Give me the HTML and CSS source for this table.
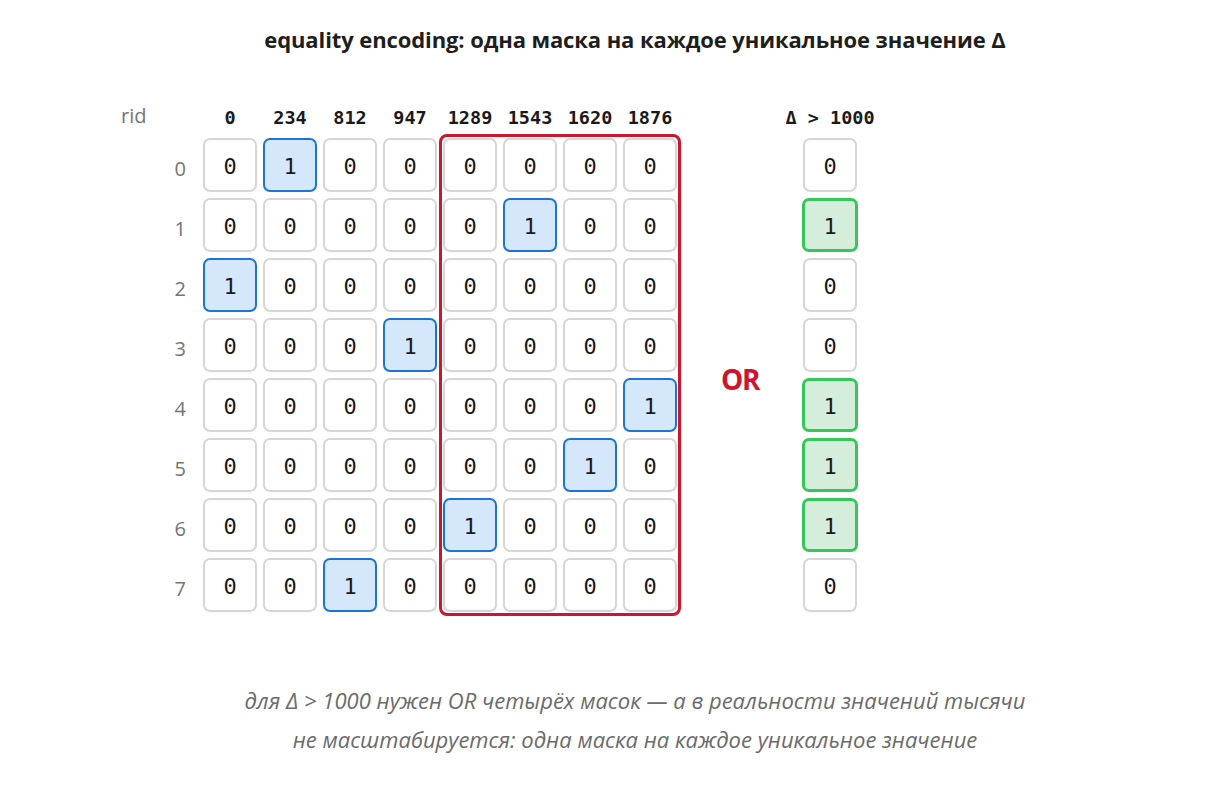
FILE: index.html
```html
<!DOCTYPE html>
<html lang="ru">
<head>
<meta charset="utf-8">
<title>equality encoding</title>
<link rel="stylesheet" href="styles.css">
</head>
<body>
<div class="page">
  <h1 class="title">equality encoding: одна маска на каждое уникальное значение Δ</h1>

  <div class="figure">
    <div class="labels">
      <div class="rid">rid</div>
      <div class="rn">0</div><div class="rn">1</div><div class="rn">2</div><div class="rn">3</div>
      <div class="rn">4</div><div class="rn">5</div><div class="rn">6</div><div class="rn">7</div>
    </div>

    <div class="group">
      <div class="heads four">
        <div class="h">0</div><div class="h">234</div><div class="h">812</div><div class="h">947</div>
      </div>
      <div class="cells four">
        <div class="c">0</div><div class="c on">1</div><div class="c">0</div><div class="c">0</div>
        <div class="c">0</div><div class="c">0</div><div class="c">0</div><div class="c">0</div>
        <div class="c on">1</div><div class="c">0</div><div class="c">0</div><div class="c">0</div>
        <div class="c">0</div><div class="c">0</div><div class="c">0</div><div class="c on">1</div>
        <div class="c">0</div><div class="c">0</div><div class="c">0</div><div class="c">0</div>
        <div class="c">0</div><div class="c">0</div><div class="c">0</div><div class="c">0</div>
        <div class="c">0</div><div class="c">0</div><div class="c">0</div><div class="c">0</div>
        <div class="c">0</div><div class="c">0</div><div class="c on">1</div><div class="c">0</div>
      </div>
    </div>

    <div class="group">
      <div class="heads four">
        <div class="h">1289</div><div class="h">1543</div><div class="h">1620</div><div class="h">1876</div>
      </div>
      <div class="box">
        <div class="cells four">
          <div class="c">0</div><div class="c">0</div><div class="c">0</div><div class="c">0</div>
          <div class="c">0</div><div class="c on">1</div><div class="c">0</div><div class="c">0</div>
          <div class="c">0</div><div class="c">0</div><div class="c">0</div><div class="c">0</div>
          <div class="c">0</div><div class="c">0</div><div class="c">0</div><div class="c">0</div>
          <div class="c">0</div><div class="c">0</div><div class="c">0</div><div class="c on">1</div>
          <div class="c">0</div><div class="c">0</div><div class="c on">1</div><div class="c">0</div>
          <div class="c on">1</div><div class="c">0</div><div class="c">0</div><div class="c">0</div>
          <div class="c">0</div><div class="c">0</div><div class="c">0</div><div class="c">0</div>
        </div>
      </div>
    </div>

    <div class="or-col">
      <div class="or">OR</div>
    </div>

    <div class="group">
      <div class="heads one">
        <div class="h wide">Δ &gt; 1000</div>
      </div>
      <div class="cells one">
        <div class="c">0</div>
        <div class="c hit">1</div>
        <div class="c">0</div>
        <div class="c">0</div>
        <div class="c hit">1</div>
        <div class="c hit">1</div>
        <div class="c hit">1</div>
        <div class="c">0</div>
      </div>
    </div>
  </div>

  <div class="caption">
    <p>для Δ &gt; 1000 нужен OR четырёх масок — а в реальности значений тысячи</p>
    <p>не масштабируется: одна маска на каждое уникальное значение</p>
  </div>
</div>
</body>
</html>
```

FILE: styles.css
```css
* { box-sizing: border-box; }

html, body {
  margin: 0;
  padding: 0;
  background: #ffffff;
}

body {
  font-family: "Open Sans", "Noto Sans", "DejaVu Sans", sans-serif;
  color: #1f1f1f;
}

.page {
  padding: 24px 0 0 63px;
}

.title {
  margin: 0;
  text-align: center;
  font-size: 22px;
  font-weight: 700;
  line-height: 30px;
  color: #1e1e1e;
  letter-spacing: -0.1px;
}

.figure {
  display: flex;
  align-items: flex-start;
  gap: 6px;
  margin: 48px 0 0 58px;
}

.labels {
  width: 76px;
  display: grid;
  grid-template-rows: 30px repeat(8, 54px);
  row-gap: 6px;
  color: #757575;
  font-size: 20px;
}

.rid {
  display: flex;
  align-items: center;
  padding-bottom: 3px;
}

.rn {
  display: flex;
  align-items: center;
  justify-content: flex-end;
  padding: 6px 11px 0 0;
}

.group {
  display: flex;
  flex-direction: column;
}

.heads {
  display: grid;
  column-gap: 6px;
  height: 30px;
  margin-bottom: 6px;
}

.four { grid-template-columns: repeat(4, 54px); }
.one { grid-template-columns: 54px; }

.h {
  display: flex;
  align-items: center;
  justify-content: center;
  font-family: "DejaVu Sans Mono", "Liberation Mono", monospace;
  font-weight: 700;
  font-size: 18.5px;
  color: #1a1a1a;
  white-space: nowrap;
}

.cells {
  display: grid;
  grid-auto-rows: 54px;
  gap: 6px;
}

.c {
  display: flex;
  align-items: center;
  justify-content: center;
  padding-top: 3px;
  border: 2px solid #d6d6d6;
  border-radius: 7px;
  background: #ffffff;
  font-family: "DejaVu Sans Mono", "Liberation Mono", monospace;
  font-size: 22px;
  color: #1a1a1a;
}

.c.on {
  background: #d5e7fb;
  border-color: #1c74d9;
}

.c.hit {
  background: #d5eedb;
  border: 3px solid #36c75a;
  margin: 0 -1px;
}

.box {
  margin: -4px;
  padding: 1px;
  border: 3px solid #d0142c;
  border-radius: 8px;
}

.or-col {
  width: 114px;
  height: 516px;
  padding-top: 36px;
  display: flex;
  align-items: center;
  justify-content: center;
}

.or {
  font-size: 28px;
  font-weight: 700;
  color: #d0142c;
  letter-spacing: -1.5px;
  padding-top: 2px;
}

.caption {
  margin-top: 63px;
  text-align: center;
  font-style: italic;
  color: #6b6b6b;
  font-size: 22px;
  line-height: 39px;
}

.caption p {
  margin: 0;
}
```
